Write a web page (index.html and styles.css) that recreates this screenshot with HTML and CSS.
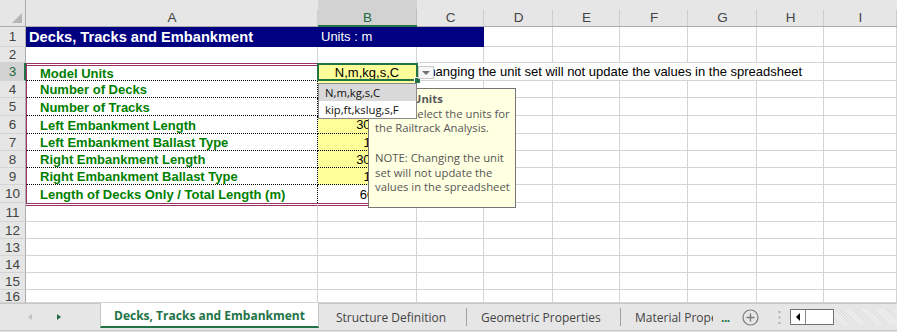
FILE: index.html
```html
<!DOCTYPE html>
<html>
<head>
<meta charset="utf-8">
<link rel="stylesheet" href="styles.css">
</head>
<body>
<div class="app">
  <div class="sheet">
    <div class="corner"><span class="tri"></span></div>
    <div class="ch">A</div><div class="ch cur">B</div><div class="ch">C</div><div class="ch">D</div><div class="ch">E</div><div class="ch">F</div><div class="ch">G</div><div class="ch">H</div><div class="ch">I</div>

    <div class="rh">1</div><div class="c navy title">Decks, Tracks and Embankment</div><div class="c navy units">Units : m</div><div class="c navy"></div><div class="c"></div><div class="c"></div><div class="c"></div><div class="c"></div><div class="c"></div><div class="c"></div>

    <div class="rh">2</div><div class="c nb"></div><div class="c nb"></div><div class="c"></div><div class="c"></div><div class="c"></div><div class="c"></div><div class="c"></div><div class="c"></div><div class="c"></div>

    <div class="rh cur">3</div>
    <div class="c lab top">Model Units</div>
    <div class="c val cur">N,m,kg,s,C
      <div class="selbox"><span class="handle"></span></div>
      <div class="ddbtn"><span class="caret"></span></div>
      <div class="tip"><b>Model Units</b><br>Please select the units for<br>the Railtrack Analysis.<br><br>NOTE: Changing the unit<br>set will not update the<br>values in the spreadsheet</div>
      <div class="ddlist"><div class="item hl">N,m,kg,s,C</div><div class="item">kip,ft,kslug,s,F</div></div>
    </div>
    <div class="c note">Changing the unit set will not update the values in the spreadsheet</div>
    <div class="c"></div>

    <div class="rh">4</div><div class="c lab">Number of Decks</div><div class="c val"></div><div class="c"></div><div class="c"></div><div class="c"></div><div class="c"></div><div class="c"></div><div class="c"></div><div class="c"></div>
    <div class="rh">5</div><div class="c lab">Number of Tracks</div><div class="c val"></div><div class="c"></div><div class="c"></div><div class="c"></div><div class="c"></div><div class="c"></div><div class="c"></div><div class="c"></div>
    <div class="rh">6</div><div class="c lab">Left Embankment Length</div><div class="c val">300</div><div class="c"></div><div class="c"></div><div class="c"></div><div class="c"></div><div class="c"></div><div class="c"></div><div class="c"></div>
    <div class="rh">7</div><div class="c lab">Left Embankment Ballast Type</div><div class="c val">1</div><div class="c"></div><div class="c"></div><div class="c"></div><div class="c"></div><div class="c"></div><div class="c"></div><div class="c"></div>
    <div class="rh">8</div><div class="c lab">Right Embankment Length</div><div class="c val">300</div><div class="c"></div><div class="c"></div><div class="c"></div><div class="c"></div><div class="c"></div><div class="c"></div><div class="c"></div>
    <div class="rh">9</div><div class="c lab">Right Embankment Ballast Type</div><div class="c val">1</div><div class="c"></div><div class="c"></div><div class="c"></div><div class="c"></div><div class="c"></div><div class="c"></div><div class="c"></div>
    <div class="rh">10</div><div class="c lab last">Length of Decks Only / Total Length (m)</div><div class="c val last">60</div><div class="c"></div><div class="c"></div><div class="c"></div><div class="c"></div><div class="c"></div><div class="c"></div><div class="c"></div>

    <div class="rh">11</div><div class="c bb"></div><div class="c bb"></div><div class="c"></div><div class="c"></div><div class="c"></div><div class="c"></div><div class="c"></div><div class="c"></div><div class="c"></div>
    <div class="rh">12</div><div class="c"></div><div class="c"></div><div class="c"></div><div class="c"></div><div class="c"></div><div class="c"></div><div class="c"></div><div class="c"></div><div class="c"></div>
    <div class="rh">13</div><div class="c"></div><div class="c"></div><div class="c"></div><div class="c"></div><div class="c"></div><div class="c"></div><div class="c"></div><div class="c"></div><div class="c"></div>
    <div class="rh">14</div><div class="c"></div><div class="c"></div><div class="c"></div><div class="c"></div><div class="c"></div><div class="c"></div><div class="c"></div><div class="c"></div><div class="c"></div>
    <div class="rh">15</div><div class="c"></div><div class="c"></div><div class="c"></div><div class="c"></div><div class="c"></div><div class="c"></div><div class="c"></div><div class="c"></div><div class="c"></div>
    <div class="rh">16</div><div class="c"></div><div class="c"></div><div class="c"></div><div class="c"></div><div class="c"></div><div class="c"></div><div class="c"></div><div class="c"></div><div class="c"></div>
  </div>

  <div class="tabs">
    <div class="nav"><span class="arr left"></span><span class="arr right"></span></div>
    <div class="tab active">Decks, Tracks and Embankment</div>
    <div class="tab t2">Structure Definition</div>
    <span class="sep"></span>
    <div class="tab t3">Geometric Properties</div>
    <span class="sep"></span>
    <div class="tab t4"><span class="clip">Material Properties</span></div>
    <div class="more">...</div>
    <div class="add"><svg width="17" height="17" viewBox="0 0 17 17"><circle cx="8.5" cy="8.5" r="7.5" fill="none" stroke="#7b7b7b" stroke-width="1.2"/><path d="M8.5 4.5v8M4.5 8.5h8" stroke="#7b7b7b" stroke-width="1.4"/></svg></div>
    <div class="vdots"><svg width="3" height="13" viewBox="0 0 3 13"><rect x="0.5" y="0" width="2" height="2" fill="#b0b0b0"/><rect x="0.5" y="5.5" width="2" height="2" fill="#b0b0b0"/><rect x="0.5" y="11" width="2" height="2" fill="#b0b0b0"/></svg></div>
    <div class="hscroll"><div class="sbtn"><span class="ltri"></span></div><div class="thumb"></div></div>
    <div class="track"></div>
  </div>
</div>
</body>
</html>
```
FILE: styles.css
```css
* { box-sizing: border-box; }
html, body { margin: 0; padding: 0; }
body {
  width: 897px;
  height: 332px;
  overflow: hidden;
  background: #e6e6e6;
  font-family: "Liberation Sans", Arial, sans-serif;
}
.app { display: flex; flex-direction: column; width: 897px; height: 332px; }

.sheet {
  display: grid;
  grid-template-columns: 26px 292px 99px 67px 69px 67px 68px 69px 67px 73px;
  grid-template-rows: 27px 20px 16px 18px 17px 18px 18px 17px 17px 17px 18px 19px 17px 17px 17px 17px 13px;
  height: 303px;
  overflow: hidden;
  background: #fff;
}

.corner {
  background: #e6e6e6;
  border-right: 1px solid #ababab;
  border-bottom: 1px solid #ababab;
  display: flex;
  justify-content: flex-end;
  align-items: flex-end;
  padding: 0 3px 3px 0;
}
.tri {
  width: 10px; height: 10px;
  background: #b5b5b5;
  clip-path: polygon(100% 0, 100% 100%, 0 100%);
}

.ch {
  background: linear-gradient(#cdcdcd, #cdcdcd) no-repeat right bottom / 1px 16px, #e6e6e6;
  border-bottom: 1px solid #ababab;
  display: flex;
  justify-content: center;
  align-items: center;
  padding-top: 9px;
  font-size: 13.5px;
  color: #444;
}
.ch.cur {
  background: linear-gradient(#bdbdbd, #bdbdbd) no-repeat right bottom / 1px 16px, #d2d2d2;
  border-bottom: 2px solid #217346;
  color: #1e6b41;
  padding-top: 10px;
}

.rh {
  background: #e6e6e6;
  border-right: 1px solid #ababab;
  border-bottom: 1px solid #d4d4d4;
  display: flex;
  justify-content: center;
  align-items: center;
  font-size: 13.5px;
  color: #444;
  overflow: hidden;
}
.rh.cur {
  background: #d2d2d2;
  border-right: 2px solid #217346;
  color: #1e6b41;
  padding-left: 1px;
}

.c {
  border-right: 1px solid #d4d4d4;
  border-bottom: 1px solid #d4d4d4;
  display: flex;
  align-items: center;
  font-size: 13px;
  color: #000;
  white-space: nowrap;
  min-width: 0;
}
.navy {
  background: #000080;
  border-right-color: #000080;
  border-bottom-color: #000080;
  color: #fff;
}
.title { font-weight: bold; font-size: 14.67px; padding-left: 3px; }
.units { padding-left: 3px; }
.nb { border-bottom: none; }

.lab {
  color: #008000;
  font-weight: bold;
  padding-left: 13px;
  padding-top: 1px;
  border-left: 1px solid #993366;
  border-right: 1px dotted #000;
  border-bottom: 1px dotted #000;
}
.lab.top { border-top: 3px double #993366; }
.val {
  justify-content: center;
  background: #ffff99;
  border-right: 1px solid #993366;
  border-bottom: 1px dotted #000;
}
.lab.last, .val.last { border-bottom: none; }
.val.last { background: #fff; }
.val.cur { position: relative; padding-top: 1px; }
.bb { border-top: 3px double #993366; }

.note { grid-column: span 6; padding-left: 2px; overflow: visible; }

.selbox {
  position: absolute;
  left: -1px; top: 0;
  width: 101px; height: 18px;
  border: 2px solid #217346;
  z-index: 2;
}
.handle {
  position: absolute;
  right: -4px; bottom: -4px;
  width: 6px; height: 6px;
  background: #217346;
  border-left: 1px solid #fff;
  border-top: 1px solid #fff;
}
.ddbtn {
  position: absolute;
  left: 100px; top: 3px;
  width: 16px; height: 13px;
  background: #f7f7f7;
  border: 1px solid #c8c8c8;
  display: flex;
  justify-content: center;
  align-items: center;
  z-index: 3;
}
.caret {
  width: 0; height: 0;
  border-left: 4px solid transparent;
  border-right: 4px solid transparent;
  border-top: 4px solid #707070;
}
.tip {
  position: absolute;
  left: 50px; top: 25px;
  width: 148px; height: 120px;
  background: #ffffe1;
  border: 1px solid #767676;
  padding: 3px 6px 0 6px;
  font-family: "Open Sans", "Noto Sans", sans-serif;
  font-size: 11.3px;
  line-height: 14.7px;
  color: #575757;
  white-space: nowrap;
  z-index: 3;
}
.tip b { font-weight: bold; }
.ddlist {
  position: absolute;
  left: 0; top: 20px;
  width: 99px; height: 36px;
  background: #fff;
  border: 1px solid #8a8a8a;
  font-family: "Open Sans", "Noto Sans", sans-serif;
  font-size: 11.3px;
  color: #111;
  z-index: 4;
}
.item { height: 17px; line-height: 17px; padding-left: 6px; }
.item.hl { background: #d9d9d9; }

/* tab bar */
.tabs {
  display: flex;
  align-items: stretch;
  height: 28px;
  background: #e6e6e6;
  border-top: 1px solid #c6c6c6;
  border-bottom: 1px solid #c6c6c6;
  font-family: "Open Sans", "Noto Sans", sans-serif;
  font-size: 12px;
  color: #444;
}
.nav {
  width: 100px;
  display: flex;
  align-items: center;
  padding-left: 28px;
  gap: 25px;
}
.arr { width: 0; height: 0; border-top: 3.5px solid transparent; border-bottom: 3.5px solid transparent; }
.arr.left { border-right: 4px solid #c2c2c2; }
.arr.right { border-left: 4px solid #1e6b41; }
.tab {
  display: flex;
  align-items: center;
  white-space: nowrap;
  overflow: hidden;
}
.tab.active {
  width: 219px;
  margin-top: -1px;
  height: 25px;
  justify-content: center;
  background: #fff;
  border-left: 1px solid #c6c6c6;
  border-right: 1px solid #c6c6c6;
  border-bottom: 2px solid #217346;
  color: #217346;
  font-weight: bold;
  padding-top: 2px;
}
.t2 { width: 147px; padding-left: 17px; padding-top: 1px; }
.t3 { width: 153px; padding-left: 14px; padding-top: 1px; }
.t4 { width: 92px; padding-left: 14px; padding-top: 1px; }
.clip { display: block; width: 78px; overflow: hidden; }
.sep { width: 1px; height: 18px; align-self: center; background: #a0a0a0; }
.more {
  width: 28px;
  display: flex;
  align-items: center;
  padding-left: 8px;
  color: #217346;
  font-weight: bold;
  letter-spacing: -0.5px;
}
.add { width: 30px; display: flex; align-items: center; padding-left: 1px; }
.vdots { width: 19px; display: flex; align-items: center; padding-left: 7px; }
.hscroll {
  width: 44px;
  height: 16px;
  align-self: center;
  display: flex;
  border: 1px solid #707070;
  background: #fff;
}
.sbtn {
  width: 15px;
  border-right: 1px solid #8a8a8a;
  display: flex;
  align-items: center;
  justify-content: center;
}
.ltri { width: 0; height: 0; border-top: 4px solid transparent; border-bottom: 4px solid transparent; border-right: 4px solid #000; }
.thumb { flex: 1; }
.track {
  flex: 1;
  height: 16px;
  align-self: center;
  background: repeating-linear-gradient(45deg, #e0e0e0 0 1px, #f0f0f0 1px 2px);
}
```
